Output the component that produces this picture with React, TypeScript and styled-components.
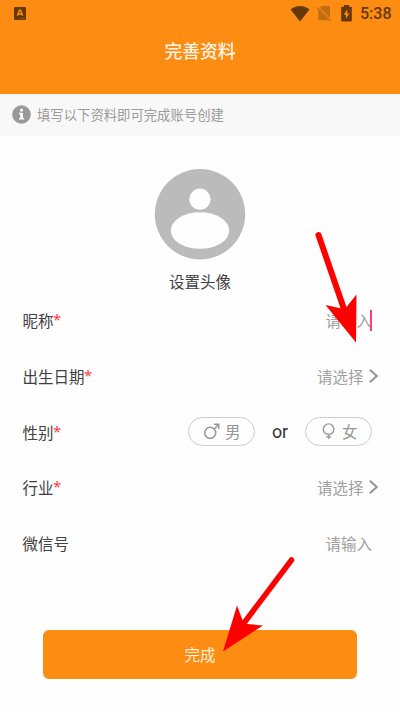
import React from "react";
import styled, { createGlobalStyle } from "styled-components";

const GlobalStyle = createGlobalStyle`
  * { box-sizing: border-box; }
  body {
    margin: 0;
    background: #fefefe;
    font-family: Roboto, "Noto Sans CJK SC", sans-serif;
    color: #414141;
  }
  svg { flex-shrink: 0; }
`;

const Screen = styled.div`
  position: relative;
  width: 400px;
  height: 712px;
  overflow: hidden;
  background: #fefefe;
`;

const Header = styled.header`
  height: 93.5px;
  background: #fd8c12;
`;

const StatusBar = styled.div`
  display: flex;
  align-items: center;
  justify-content: space-between;
  height: 27px;
  padding: 0 9px 0 14px;
  color: #653807;
`;

const StatusIcons = styled.div`
  display: flex;
  align-items: center;
`;

const Clock = styled.span`
  margin-left: 8px;
  font-size: 16px;
  font-weight: 500;
  line-height: 28px;
  width: 31px;
  white-space: nowrap;
`;

const Title = styled.h1`
  margin: 0;
  height: 49px;
  line-height: 49px;
  text-align: center;
  font-size: 17.8px;
  font-weight: 500;
  color: #fff4e6;
`;

const Notice = styled.div`
  display: flex;
  align-items: center;
  gap: 6.5px;
  height: 42.5px;
  padding: 0 0 1.5px 11.5px;
  background: #f8f8f8;
  font-size: 13.35px;
  color: #9b9b9b;
`;

const AvatarPicker = styled.div`
  display: flex;
  flex-direction: column;
  align-items: center;
  height: 156.4px;
  padding-top: 33px;
`;

const AvatarLabel = styled.span`
  margin-top: 11px;
  line-height: 24px;
  font-size: 15.5px;
`;

const Form = styled.form`
  padding: 0 28px 0 22.4px;
`;

const Row = styled.div`
  display: flex;
  align-items: center;
  justify-content: space-between;
  height: 55.67px;
  font-size: 15.5px;
`;

const Required = styled.span`
  margin-left: -0.5px;
  font-family: "Noto Sans", sans-serif;
  font-size: 15px;
  line-height: 0;
  vertical-align: 2px;
  color: #ff3b3b;
`;

const Value = styled.div<{ $chevron?: boolean }>`
  display: flex;
  align-items: center;
  gap: 5px;
  margin-right: ${(p) => (p.$chevron ? "-6.5px" : "0")};
  color: #a0a0a0;
`;

const Caret = styled.span`
  width: 2px;
  height: 21px;
  margin-left: -7px;
  background: #ff3d7d;
`;

const GenderGroup = styled.div`
  display: flex;
  align-items: center;
`;

const GenderPill = styled.span`
  display: flex;
  align-items: center;
  gap: 5px;
  width: 67px;
  height: 29px;
  padding: 0 0 1px 15px;
  border: 1px solid #cbcbcb;
  border-radius: 15px;
  color: #979797;
`;

const Or = styled.span`
  width: 50px;
  text-align: center;
  font-size: 17.8px;
  color: #333;
`;

const Submit = styled.button`
  display: block;
  width: 314px;
  height: 48.5px;
  margin: 59.4px 0 0 20.6px;
  padding: 4px 0 0;
  border: 0;
  border-radius: 6px;
  background: #fd8c12;
  color: #fff0dc;
  font: 400 15.5px/44.5px Roboto, "Noto Sans CJK SC", sans-serif;
`;

const Annotations = styled.svg`
  position: absolute;
  inset: 0;
  pointer-events: none;
`;

const KeyboardIcon = () => (
  <svg width="12" height="13" viewBox="0 0 12 13">
    <rect width="12" height="13" rx="1" fill="#653807" />
    <path d="M3.4 8.8 5.4 3.3h1.2l2 5.5M4.3 7h3.4" fill="none" stroke="#fd8c12" strokeWidth="1.4" />
    <path d="M6.5 11.5h4" stroke="#c77415" strokeWidth="0.8" strokeDasharray="1 .5" />
  </svg>
);

const WifiIcon = () => (
  <svg width="20" height="16" viewBox="0 0 20 16">
    <path d="M.5 3.6Q4.5 0 10 0t9.5 3.6L10 15.4Z" fill="currentColor" />
  </svg>
);

const SimSvg = styled.svg`
  margin-left: 6px;
`;

const NoSimIcon = () => (
  <SimSvg width="16" height="17" viewBox="0 0 16 17">
    <path d="M5.5 1H13q1 0 1 1v10.9L3.8 2.7ZM2.2 4.2 13 15.2H3q-.8 0-.8-.8Z" fill="#c16d12" />
    <path d="M.9 2.4 14.8 16" stroke="#c16d12" strokeWidth="1.3" />
  </SimSvg>
);

const BatterySvg = styled.svg`
  margin-left: 9px;
`;

const BatteryIcon = () => (
  <BatterySvg width="11" height="17" viewBox="0 0 11 17">
    <path d="M3 0h5v1.7h2q.8 0 .8.8v13.2q0 .8-.8.8H1q-.8 0-.8-.8V2.5q0-.8.8-.8h2Z" fill="currentColor" />
    <path d="M6.3 4.3 2.8 9.7h2.1v4.1L8.3 8.4H6.2Z" fill="#fd8c12" />
  </BatterySvg>
);

const InfoIcon = () => (
  <svg width="19" height="19" viewBox="0 0 19 19">
    <circle cx="9.5" cy="9.5" r="9.3" fill="#999" />
    <circle cx="9.5" cy="5.1" r="1.6" fill="#fff" />
    <path d="M7 7.8h4v5.3h1.2v1.5H7v-1.5h1.2V9.3H7Z" fill="#fff" />
  </svg>
);

const Avatar = () => (
  <svg width="92" height="91" viewBox="0 0 92 91">
    <circle cx="46" cy="45.2" r="45.2" fill="#bbb" />
    <circle cx="46" cy="30.2" r="10.6" fill="#fefefe" />
    <ellipse cx="46" cy="61.5" rx="29.2" ry="18.3" fill="#fefefe" />
  </svg>
);

const ChevronIcon = () => (
  <svg width="10" height="14" viewBox="0 0 10 14">
    <path d="m.8 .8 7 6.2-7 6.2" fill="none" stroke="#949494" strokeWidth="2" />
  </svg>
);

const MaleIcon = () => (
  <svg width="16" height="16" viewBox="0 0 16 16" fill="none" stroke="currentColor" strokeWidth="1.5">
    <circle cx="6.2" cy="9.8" r="5.5" />
    <path d="m10.2 5.9 4.2-4.4M10 1.3h4.7V6" />
  </svg>
);

const FemaleIcon = () => (
  <svg width="16" height="16" viewBox="0 0 16 16" fill="none" stroke="currentColor" strokeWidth="1.4">
    <circle cx="7.6" cy="6.2" r="5.3" />
    <path d="M7.6 11.5V16M5 13.9h5.2" />
  </svg>
);

function Field({ label, required, children }: { label: string; required?: boolean; children: React.ReactNode }) {
  return (
    <Row>
      <span>
        {label}
        {required && <Required>*</Required>}
      </span>
      {children}
    </Row>
  );
}

export default function App() {
  return (
    <Screen>
      <GlobalStyle />
      <Header>
        <StatusBar>
          <KeyboardIcon />
          <StatusIcons>
            <WifiIcon />
            <NoSimIcon />
            <BatteryIcon />
            <Clock>5:38</Clock>
          </StatusIcons>
        </StatusBar>
        <Title>完善资料</Title>
      </Header>
      <Notice>
        <InfoIcon />
        填写以下资料即可完成账号创建
      </Notice>
      <AvatarPicker>
        <Avatar />
        <AvatarLabel>设置头像</AvatarLabel>
      </AvatarPicker>
      <Form>
        <Field label="昵称" required>
          <Value>请输入<Caret /></Value>
        </Field>
        <Field label="出生日期" required>
          <Value $chevron>请选择<ChevronIcon /></Value>
        </Field>
        <Field label="性别" required>
          <GenderGroup>
            <GenderPill><MaleIcon />男</GenderPill>
            <Or>or</Or>
            <GenderPill><FemaleIcon />女</GenderPill>
          </GenderGroup>
        </Field>
        <Field label="行业" required>
          <Value $chevron>请选择<ChevronIcon /></Value>
        </Field>
        <Field label="微信号">
          <Value>请输入</Value>
        </Field>
        <Submit type="button">完成</Submit>
      </Form>
      <Annotations width="400" height="712" viewBox="0 0 400 712" fill="#f00" stroke="#f00">
        <path d="M318.5 235 344 309" strokeWidth="6" strokeLinecap="round" />
        <path d="m356 342.5-30.5-37.5 16 3.5 5-1.5 10-12.5Z" stroke="none" />
        <path d="M291.5 560 244 623" strokeWidth="5.5" strokeLinecap="round" />
        <path d="m223 651.5 14-46 5.5 14.5 5 4 15.5 1.5Z" stroke="none" />
      </Annotations>
    </Screen>
  );
}
